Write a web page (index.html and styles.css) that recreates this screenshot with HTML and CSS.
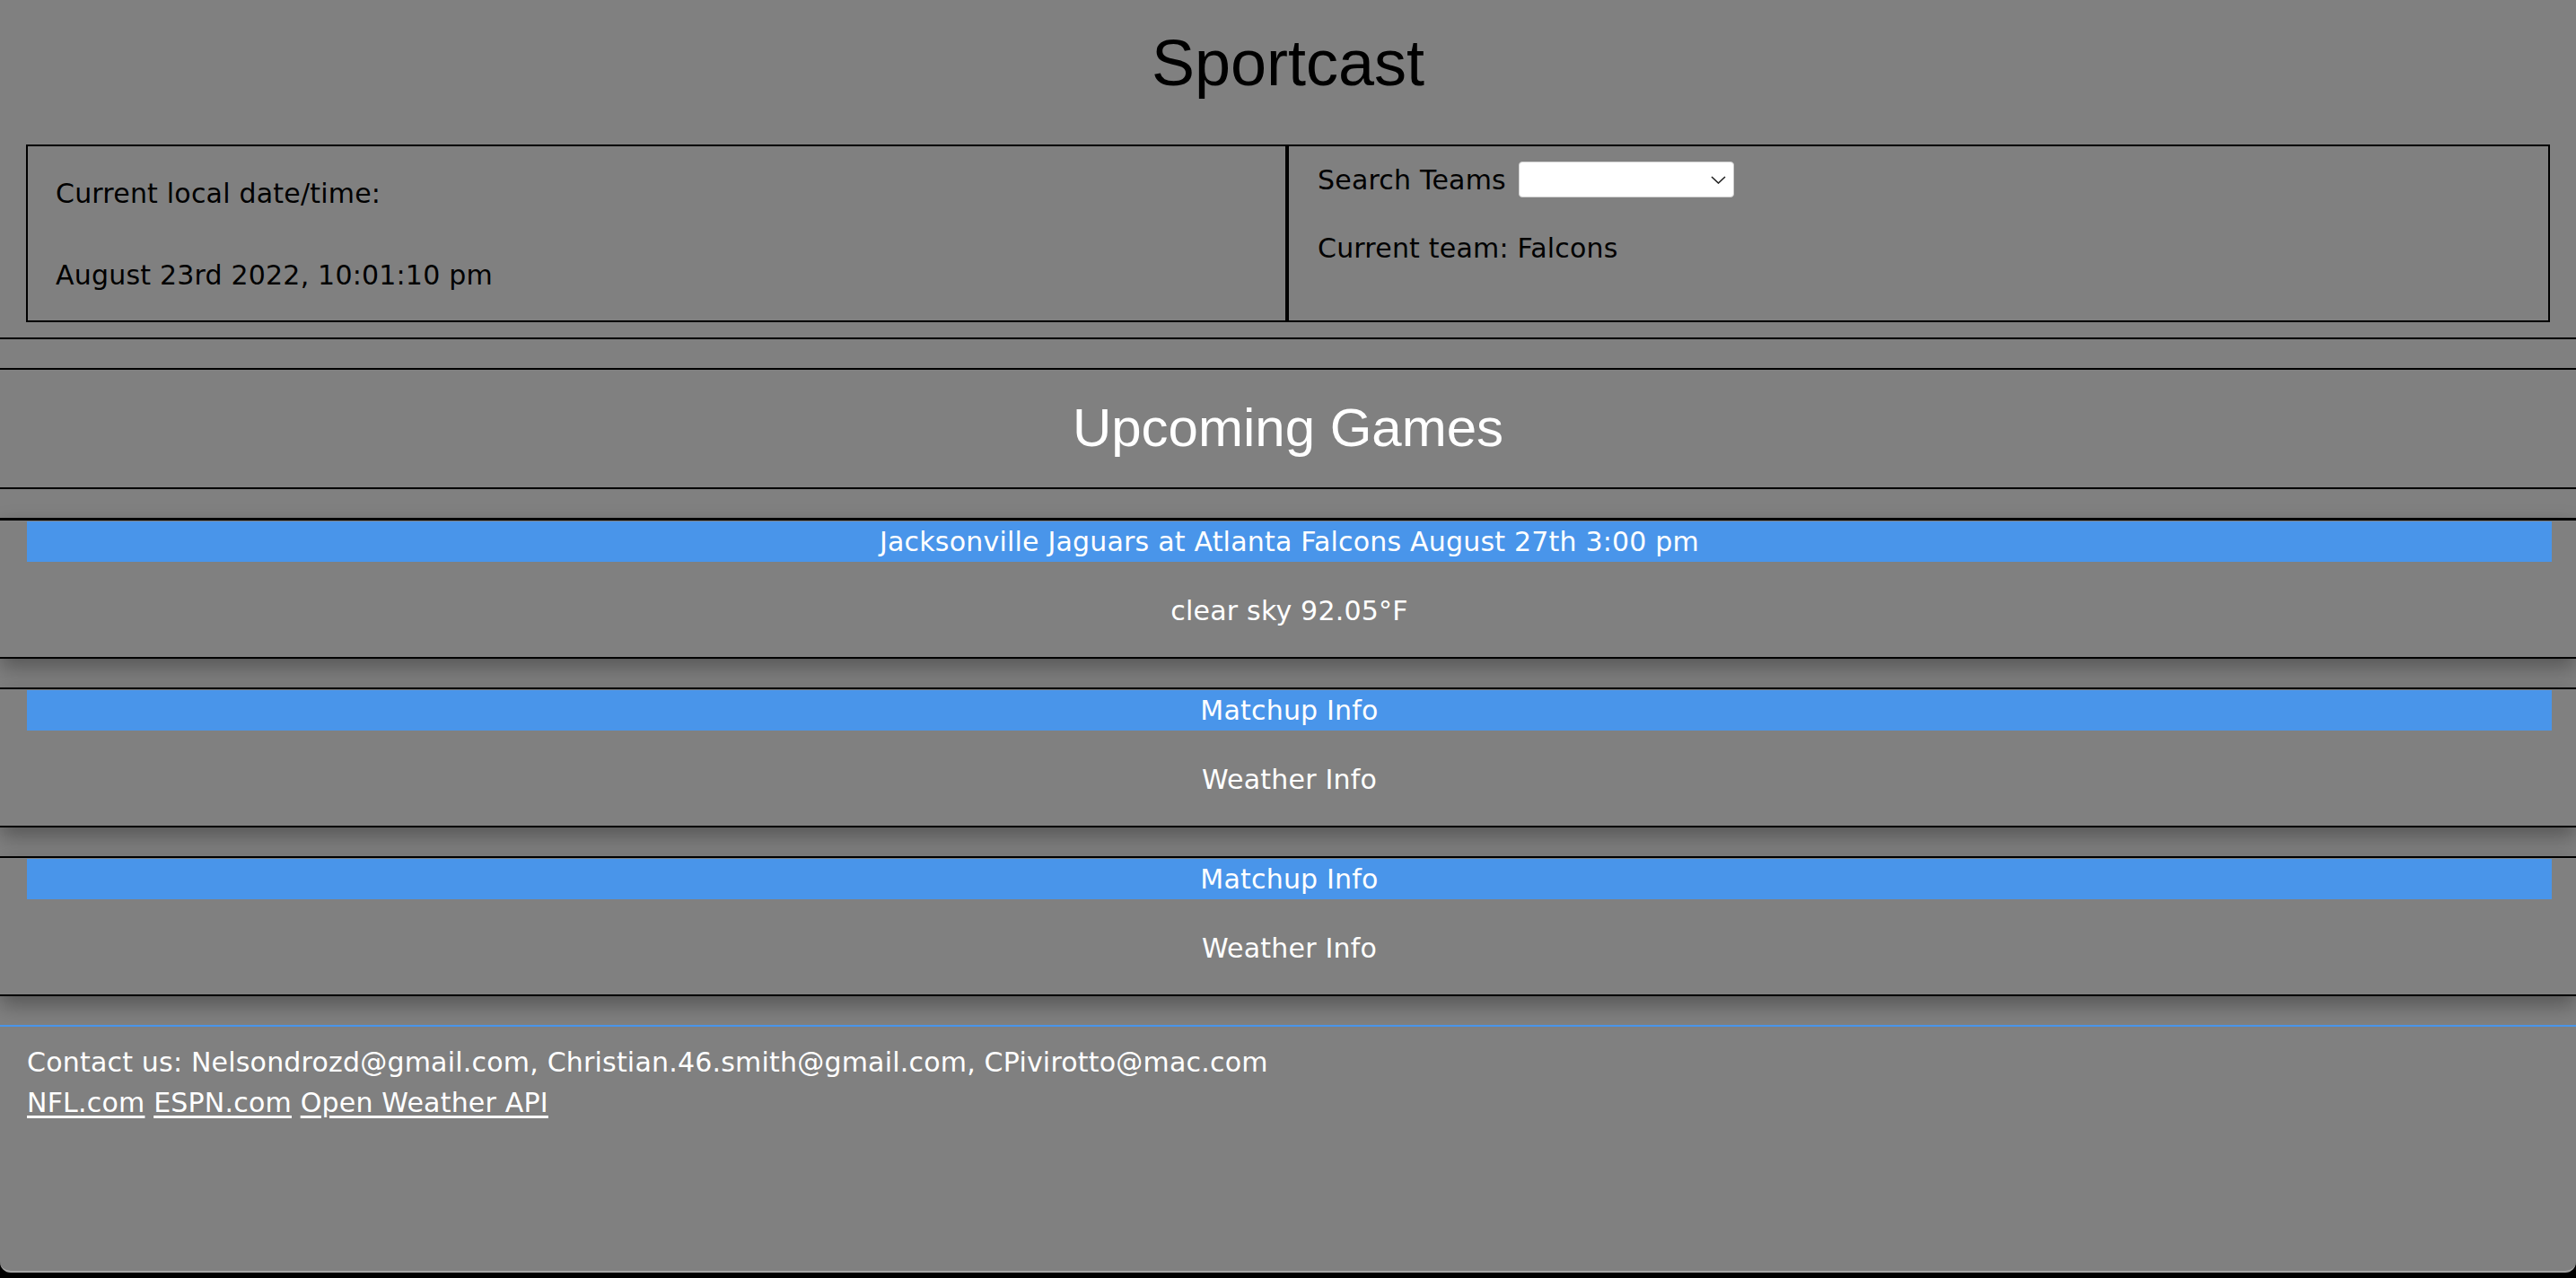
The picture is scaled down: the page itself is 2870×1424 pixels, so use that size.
FILE: index.html
```html
<!DOCTYPE html>
<html lang="en">
<head>
<meta charset="utf-8">
<title>Sportcast</title>
<link rel="stylesheet" href="styles.css">
</head>
<body>
<div class="page">
  <header class="site-header">
    <h1 class="site-title">Sportcast</h1>
  </header>

  <section class="info">
    <div class="info-grid">
      <div class="info-cell info-cell--time">
        <p class="info-text">Current local date/time:</p>
        <p class="info-text info-text--date">August 23rd 2022, 10:01:10 pm</p>
      </div>
      <div class="info-cell info-cell--team">
        <div class="search-row">
          <label class="info-text" for="teams">Search Teams</label>
          <span class="select-wrap">
            <select id="teams" class="team-select">
              <option></option>
            </select>
            <svg class="select-chevron" width="17" height="9" viewBox="0 0 17 9" aria-hidden="true">
              <path d="M1 1 L8.5 8 L16 1" fill="none" stroke="#222" stroke-width="1.6"/>
            </svg>
          </span>
        </div>
        <p class="info-text current-team">Current team: Falcons</p>
      </div>
    </div>
  </section>

  <section class="upcoming">
    <h2 class="upcoming-title">Upcoming Games</h2>
  </section>

  <article class="game-card first">
    <div class="game-bar">Jacksonville Jaguars at Atlanta Falcons August 27th 3:00 pm</div>
    <p class="game-weather">clear sky 92.05°F</p>
  </article>

  <article class="game-card">
    <div class="game-bar">Matchup Info</div>
    <p class="game-weather">Weather Info</p>
  </article>

  <article class="game-card">
    <div class="game-bar">Matchup Info</div>
    <p class="game-weather">Weather Info</p>
  </article>

  <footer class="site-footer">
    <p class="footer-line">Contact us: Nelsondrozd@gmail.com, Christian.46.smith@gmail.com, CPivirotto@mac.com</p>
    <p class="footer-line"><a class="footer-link" href="#">NFL.com</a> <a class="footer-link" href="#">ESPN.com</a> <a class="footer-link" href="#">Open Weather API</a></p>
  </footer>
</div>
</body>
</html>
```

FILE: styles.css
```css
html {
  background: #000;
}

body {
  margin: 0;
  font-family: "DejaVu Sans", Verdana, sans-serif;
  font-size: 30px;
  line-height: 35px;
  letter-spacing: 0.2px;
  color: #000;
}

.page {
  box-sizing: border-box;
  height: 1418px;
  background: #808080;
  border-bottom: 2px solid #a6a6a6;
  border-radius: 0 0 12px 12px;
  display: flex;
  flex-direction: column;
  overflow: hidden;
}

/* Header */
.site-header {
  padding-top: 29px;
}

.site-title {
  margin: 0;
  font-family: "Liberation Sans", Arial, sans-serif;
  font-weight: normal;
  font-size: 72px;
  line-height: 82px;
  letter-spacing: 0;
  text-align: center;
  color: #000;
}

/* Info box */
.info {
  padding: 50px 29px 17px 29px;
  border-bottom: 2px solid #000;
}

.info-grid {
  display: flex;
}

.info-cell {
  flex: 1;
  border: 2px solid #000;
}

.info-cell--time {
  padding: 35px 31px 33px 31px;
}

.info-cell--team {
  padding: 17px 32px 0 32px;
}

.info-text {
  margin: 0;
}

.info-text--date {
  margin-top: 56px;
}

.search-row {
  display: flex;
  align-items: center;
  gap: 14px;
  height: 40px;
}

.select-wrap {
  position: relative;
  display: inline-block;
  width: 240px;
  height: 40px;
}

.team-select {
  appearance: none;
  -webkit-appearance: none;
  box-sizing: border-box;
  width: 240px;
  height: 40px;
  margin: 0;
  background: #fff;
  border: 1px solid #d0d0d0;
  border-radius: 4px;
  font-family: "DejaVu Sans", Verdana, sans-serif;
  font-size: 26px;
}

.select-chevron {
  position: absolute;
  right: 9px;
  top: 16px;
  pointer-events: none;
}

.current-team {
  margin-top: 39px;
}

/* Upcoming heading */
.upcoming {
  margin-top: 32px;
  border-top: 2px solid #000;
  border-bottom: 2px solid #000;
  padding: 30px 0 32px 0;
}

.upcoming-title {
  margin: 0;
  font-family: "Liberation Sans", Arial, sans-serif;
  font-weight: normal;
  font-size: 60px;
  line-height: 69px;
  letter-spacing: 0;
  text-align: center;
  color: #fff;
}

/* Game cards */
.game-card {
  margin-top: 32px;
  padding: 1px 27px 34px 30px;
  background: #808080;
  border-top: 2px solid #000;
  border-bottom: 2px solid #000;
  box-shadow: 0 10px 22px rgba(0, 0, 0, 0.33);
  text-align: center;
  color: #fff;
}

.game-card.first {
  border-top-width: 3px;
}

.game-bar {
  background: #4995ea;
  padding: 5px 0;
  color: #fff;
}

.game-weather {
  margin: 37px 0 0 0;
}

/* Footer */
.site-footer {
  flex: 1;
  margin-top: 32px;
  border-top: 2px solid #4995ea;
  padding: 17px 30px 0 30px;
  color: #fff;
}

.footer-line {
  margin: 0;
  line-height: 45px;
}

.footer-link {
  color: #fff;
  text-decoration: underline;
  text-underline-offset: 4px;
}
```
